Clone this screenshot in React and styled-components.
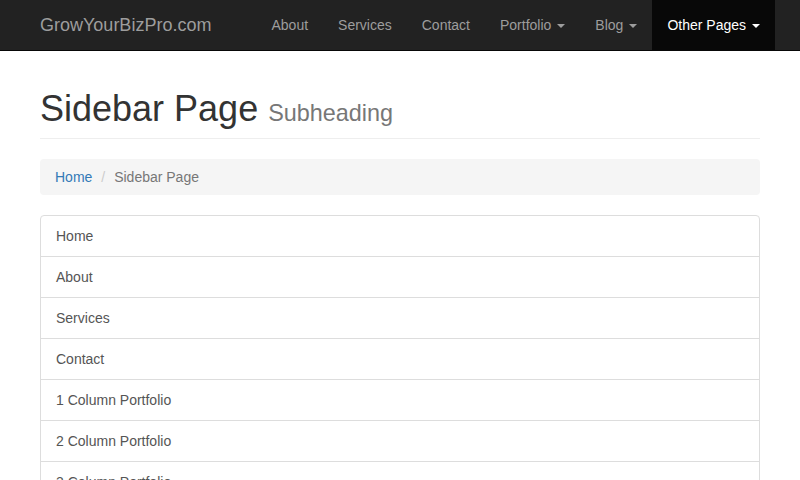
import React from 'react'
import styled, { createGlobalStyle } from 'styled-components'

const GlobalStyle = createGlobalStyle`
  * {
    box-sizing: border-box;
  }

  body {
    margin: 0;
    font-family: "Liberation Sans", Arial, Helvetica, sans-serif;
    font-size: 14px;
    line-height: 1.42857143;
    color: #333;
    background: #fff;
  }
`

const navLinks = [
  { label: 'About' },
  { label: 'Services' },
  { label: 'Contact' },
  { label: 'Portfolio', dropdown: true },
  { label: 'Blog', dropdown: true },
  { label: 'Other Pages', dropdown: true, active: true }
]

const sidebarLinks = [
  'Home',
  'About',
  'Services',
  'Contact',
  '1 Column Portfolio',
  '2 Column Portfolio',
  '3 Column Portfolio',
  '4 Column Portfolio',
  'Single Portfolio Item',
  'Blog Home 1',
  'Blog Home 2',
  'Blog Post',
  'Full Width Page',
  'Sidebar Page',
  'FAQ',
  '404',
  'Pricing Table'
]

export default function App() {
  return (
    <>
      <GlobalStyle />
      <Navbar>
        <NavContainer>
          <Brand href="#">GrowYourBizPro.com</Brand>
          <NavList>
            {navLinks.map(link => (
              <li key={link.label}>
                <NavLink href="#" $active={link.active}>
                  {link.label}
                  {link.dropdown && <Caret />}
                </NavLink>
              </li>
            ))}
          </NavList>
        </NavContainer>
      </Navbar>

      <Container>
        <PageHeader>
          Sidebar Page <small>Subheading</small>
        </PageHeader>

        <Breadcrumb>
          <li><a href="#">Home</a></li>
          <li className="active">Sidebar Page</li>
        </Breadcrumb>

        <ListGroup>
          {sidebarLinks.map(label => (
            <ListItem key={label} href="#">{label}</ListItem>
          ))}
        </ListGroup>
      </Container>
    </>
  )
}

// fixed-top style bar: the 1px bottom border overlaps the page by one pixel
const Navbar = styled.nav`
  background-color: #222;
  border-bottom: 1px solid #080808;
  margin-bottom: -1px;
`

const NavContainer = styled.div`
  display: flex;
  justify-content: space-between;
  align-items: stretch;
  width: 750px;
  margin: 0 auto;
  height: 50px;
`

const Brand = styled.a`
  display: block;
  padding: 15px;
  font-size: 18px;
  line-height: 20px;
  color: #9d9d9d;
  text-decoration: none;
`

const NavList = styled.ul`
  display: flex;
  margin: 0;
  padding: 0;
  list-style: none;
`

const NavLink = styled.a`
  display: block;
  padding: 15px;
  line-height: 20px;
  color: ${props => (props.$active ? '#fff' : '#9d9d9d')};
  background-color: ${props => (props.$active ? '#080808' : 'transparent')};
  text-decoration: none;
`

const Caret = styled.span`
  display: inline-block;
  width: 0;
  height: 0;
  margin-left: 6px;
  vertical-align: middle;
  border-top: 4px solid;
  border-right: 4px solid transparent;
  border-left: 4px solid transparent;
`

const Container = styled.div`
  width: 750px;
  margin: 0 auto;
  padding: 0 15px;
`

const PageHeader = styled.h1`
  margin: 39px 0 20px;
  padding-bottom: 9px;
  border-bottom: 1px solid #eee;
  font-size: 36px;
  font-weight: 500;
  line-height: 1.1;
  color: #333;

  small {
    font-size: 65%;
    font-weight: 400;
    line-height: 1;
    color: #777;
  }
`

const Breadcrumb = styled.ol`
  display: flex;
  margin: 0 0 20px;
  padding: 8px 15px;
  list-style: none;
  background-color: #f5f5f5;
  border-radius: 4px;

  li + li {
    margin-left: 4px;
  }

  li + li::before {
    content: '/\\00a0';
    padding: 0 5px;
    color: #ccc;
  }

  a {
    color: #337ab7;
    text-decoration: none;
  }

  .active {
    color: #777;
  }
`

const ListGroup = styled.div`
  display: flex;
  flex-direction: column;
  margin-bottom: 20px;
`

const ListItem = styled.a`
  display: block;
  padding: 10px 15px;
  margin-bottom: -1px;
  background-color: #fff;
  border: 1px solid #ddd;
  color: #555;
  text-decoration: none;

  &:first-child {
    border-top-left-radius: 4px;
    border-top-right-radius: 4px;
  }

  &:last-child {
    margin-bottom: 0;
    border-bottom-left-radius: 4px;
    border-bottom-right-radius: 4px;
  }
`
